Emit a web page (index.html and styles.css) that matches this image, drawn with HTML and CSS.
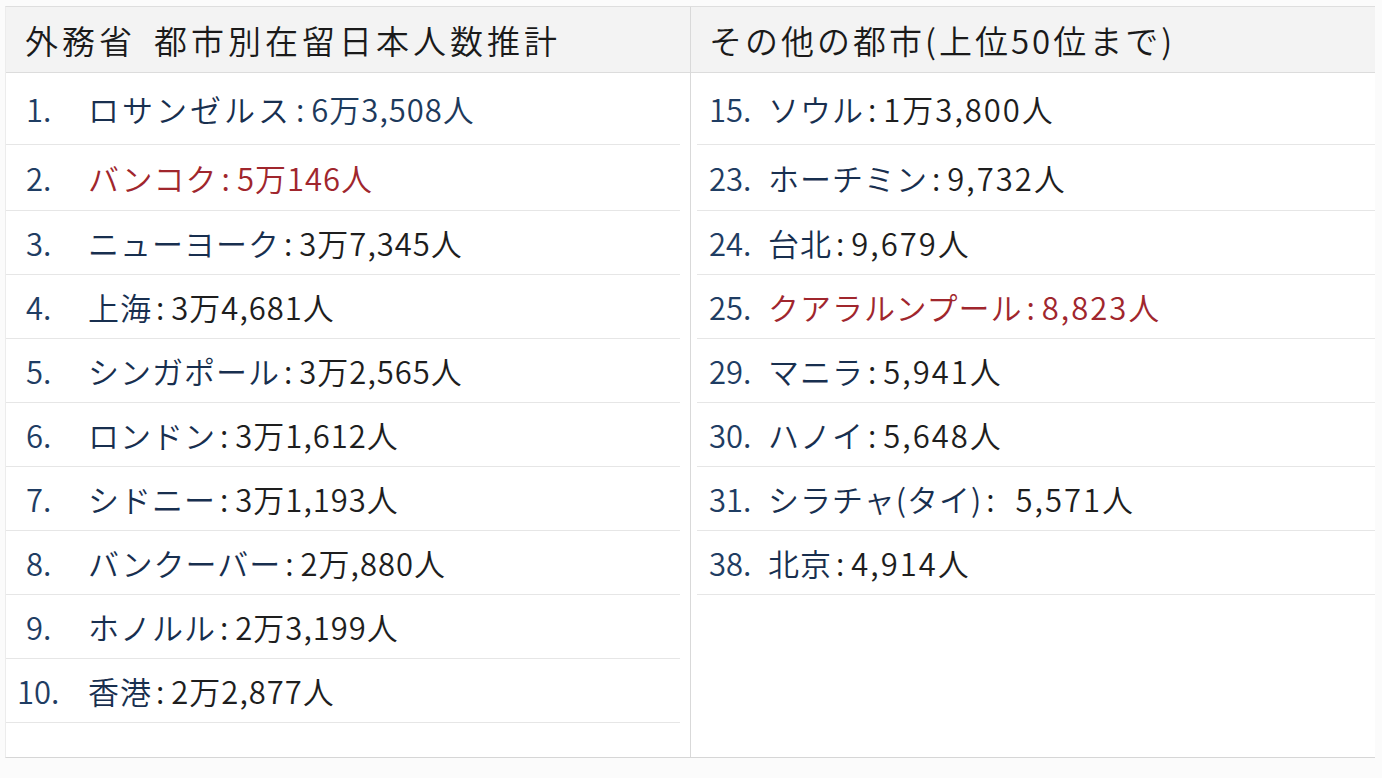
FILE: index.html
```html
<!DOCTYPE html>
<html lang="ja">
<head>
<meta charset="utf-8">
<title>都市別在留日本人数推計</title>
<link rel="stylesheet" href="styles.css">
</head>
<body>
<div class="table">
  <section class="col col-left">
    <div class="head"><span class="ministry">外務省</span>都市別在留日本人数推計</div>
    <ul class="rows">
      <li class="row navy"><span class="rank">1.</span><span class="name wide">ロサンゼルス</span><span class="sep">:</span><span class="num">6万3,508人</span></li>
      <li class="row red"><span class="rank">2.</span><span class="name">バンコク</span><span class="sep">:</span><span class="num">5万146人</span></li>
      <li class="row"><span class="rank">3.</span><span class="name">ニューヨーク</span><span class="sep">:</span><span class="num">3万7,345人</span></li>
      <li class="row"><span class="rank">4.</span><span class="name">上海</span><span class="sep">:</span><span class="num">3万4,681人</span></li>
      <li class="row"><span class="rank">5.</span><span class="name">シンガポール</span><span class="sep">:</span><span class="num">3万2,565人</span></li>
      <li class="row"><span class="rank">6.</span><span class="name">ロンドン</span><span class="sep">:</span><span class="num">3万1,612人</span></li>
      <li class="row"><span class="rank">7.</span><span class="name">シドニー</span><span class="sep">:</span><span class="num">3万1,193人</span></li>
      <li class="row"><span class="rank">8.</span><span class="name">バンクーバー</span><span class="sep">:</span><span class="num">2万,880人</span></li>
      <li class="row"><span class="rank">9.</span><span class="name">ホノルル</span><span class="sep">:</span><span class="num">2万3,199人</span></li>
      <li class="row"><span class="rank wide">10.</span><span class="name">香港</span><span class="sep">:</span><span class="num">2万2,877人</span></li>
    </ul>
  </section>
  <section class="col col-right">
    <div class="head">その他の都市(上位50位まで)</div>
    <ul class="rows">
      <li class="row"><span class="rank">15.</span><span class="name">ソウル</span><span class="sep">:</span><span class="num">1万3,800人</span></li>
      <li class="row"><span class="rank">23.</span><span class="name">ホーチミン</span><span class="sep">:</span><span class="num">9,732人</span></li>
      <li class="row"><span class="rank">24.</span><span class="name">台北</span><span class="sep">:</span><span class="num">9,679人</span></li>
      <li class="row red"><span class="rank">25.</span><span class="name">クアラルンプール</span><span class="sep">:</span><span class="num">8,823人</span></li>
      <li class="row"><span class="rank">29.</span><span class="name">マニラ</span><span class="sep">:</span><span class="num">5,941人</span></li>
      <li class="row"><span class="rank">30.</span><span class="name">ハノイ</span><span class="sep">:</span><span class="num">5,648人</span></li>
      <li class="row"><span class="rank">31.</span><span class="name">シラチャ(タイ)</span><span class="sep">:</span><span class="num gap">5,571人</span></li>
      <li class="row"><span class="rank">38.</span><span class="name">北京</span><span class="sep">:</span><span class="num">4,914人</span></li>
    </ul>
  </section>
</div>
</body>
</html>
```
FILE: styles.css
```css
* { box-sizing: border-box; }

html, body {
  margin: 0;
  padding: 0;
  background: #fbfbfb;
  font-family: "Noto Sans CJK JP", "Noto Sans", sans-serif;
}

body {
  padding: 6px 7px 0 5px;
  height: 778px;
}

.table {
  display: grid;
  grid-template-columns: 685px 1fr;
  height: 752px;
  background: #fff;
  border-top: 1px solid #dedede;
  border-bottom: 1px solid #d6d6d6;
  border-left: 1px solid #ececec;
}

.col {
  display: flex;
  flex-direction: column;
}

.col-left {
  border-right: 1px solid #d9d9d9;
}

.head {
  height: 66px;
  display: flex;
  align-items: center;
  background: #f3f3f3;
  border-bottom: 1px solid #dcdcdc;
  font-size: 33px;
  font-weight: 350;
  color: #1a1a1a;
  white-space: nowrap;
}

.col-left .head { padding-left: 19px; letter-spacing: 4px; }
.col-right .head { padding-left: 18px; letter-spacing: 3px; }

.ministry { margin-right: 18px; }

.rows {
  list-style: none;
  margin: 0;
  padding: 0;
}

.col-left .rows { margin-right: 10px; }
.col-right .rows { margin-left: 6px; }

.row {
  height: 64px;
  display: flex;
  align-items: center;
  border-bottom: 1px solid #e6e6e6;
  font-size: 31px;
  font-weight: 350;
  white-space: nowrap;
  color: #1e1e1e;
}

.row:first-child { height: 72px; }
.row:nth-child(2) { height: 66px; }

.col-left .row { padding-left: 20px; }
.col-right .row { padding-left: 12px; }

.rank {
  color: #1f3d63;
  display: inline-block;
}

.col-left .rank { width: 62px; }
.col-left .rank.wide { margin-left: -9px; width: 71px; }
.col-right .rank { width: 59px; }

.name {
  color: #182f4f;
  letter-spacing: 1px;
}

.name.wide { letter-spacing: 3px; }

.sep {
  margin: 0 7px 0 4px;
}

.num { color: #1e1e1e; letter-spacing: 1px; }
.col-right .num { letter-spacing: 2px; }
.num.gap { margin-left: 14px; }

.row.navy .sep,
.row.navy .num { color: #1d3a5c; }

.row.red .name,
.row.red .sep,
.row.red .num { color: #a0262d; }
```
